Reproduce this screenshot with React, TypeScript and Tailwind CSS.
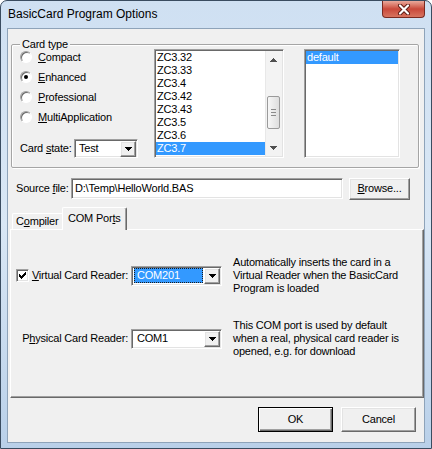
import React from 'react'

const raised =
  'bg-[#f0f0f0] border border-t-white border-l-white border-r-[#696969] border-b-[#696969] shadow-[inset_-1px_-1px_0_#a0a0a0,inset_1px_1px_0_#e3e3e3]'
const sunken =
  'bg-white border border-t-[#a0a0a0] border-l-[#a0a0a0] border-r-white border-b-white shadow-[inset_1px_1px_0_#696969,inset_-1px_-1px_0_#e3e3e3] p-px'

const versions = ['ZC3.32', 'ZC3.33', 'ZC3.4', 'ZC3.42', 'ZC3.43', 'ZC3.5', 'ZC3.6', 'ZC3.7', 'ZC3.8']

function Mn({ children }: { children: React.ReactNode }) {
  return <span className="underline decoration-1 underline-offset-[1px]">{children}</span>
}

function ArrowDown({ color = '#000' }: { color?: string }) {
  return (
    <svg width="7" height="4" viewBox="0 0 7 4" shapeRendering="crispEdges">
      <path d="M0 0h7v1h-1v1h-1v1h-1v1h-1v-1h-1v-1h-1v-1h-1z" fill={color} />
    </svg>
  )
}

function ArrowUp({ color = '#000' }: { color?: string }) {
  return (
    <svg width="7" height="4" viewBox="0 0 7 4" shapeRendering="crispEdges">
      <path d="M0 4h7v-1h-1v-1h-1v-1h-1v-1h-1v1h-1v1h-1v1h-1z" fill={color} />
    </svg>
  )
}

function DropButton() {
  return (
    <div className={`${raised} flex h-[16px] w-[16px] shrink-0 items-center justify-center`}>
      <ArrowDown />
    </div>
  )
}

function Radio({ first, rest, checked }: { first: string; rest: string; checked?: boolean }) {
  return (
    <div className="flex h-[20px] items-center">
      <div className="flex h-[12px] w-[12px] items-center justify-center rounded-full border border-t-[#a0a0a0] border-l-[#a0a0a0] border-r-white border-b-white bg-white shadow-[inset_1px_1px_0_#696969]">
        {checked && <div className="h-[4px] w-[4px] rounded-full bg-black" />}
      </div>
      <span className="ml-[6px]">
        <Mn>{first}</Mn>
        {rest}
      </span>
    </div>
  )
}

function Scrollbar() {
  return (
    <div className="flex w-[17px] shrink-0 flex-col bg-[#f3f3f3] shadow-[inset_1px_0_0_#e8e8e8]">
      <div className="flex h-[17px] items-center justify-center">
        <ArrowUp color="#505050" />
      </div>
      <div className="flex-1">
        <div className="mx-[2px] mt-[28px] flex h-[33px] flex-col items-center justify-center gap-[2px] rounded-[2px] border border-[#9a9a9a] bg-gradient-to-r from-[#f7f7f7] to-[#dedede]">
          <div className="h-px w-[5px] bg-[#8a8a8a]" />
          <div className="h-px w-[5px] bg-[#8a8a8a]" />
          <div className="h-px w-[5px] bg-[#8a8a8a]" />
        </div>
      </div>
      <div className="flex h-[17px] items-center justify-center">
        <ArrowDown color="#505050" />
      </div>
    </div>
  )
}

function Combo({ value, selected }: { value: string; selected?: boolean }) {
  return (
    <div className={`${sunken} flex h-[20px] w-[91px] items-center`}>
      <div className="flex-1 pl-[1px] pr-[1px]">
        {selected ? (
          <div className="h-[15px] border border-dotted border-[#1a1a1a] bg-[#3399ff] pl-[2px] leading-[13px] text-white">
            {value}
          </div>
        ) : (
          <div className="h-[15px] pl-[3px] leading-[15px]">{value}</div>
        )}
      </div>
      <DropButton />
    </div>
  )
}

function CloseIcon() {
  return (
    <svg width="14" height="11" viewBox="0 0 14 11">
      <path d="M3 1.5l8 8M11 1.5l-8 8" stroke="#5b1a12" strokeWidth="4" strokeLinecap="round" />
      <path d="M3 1.5l8 8M11 1.5l-8 8" stroke="#fff" strokeWidth="2.2" strokeLinecap="round" />
    </svg>
  )
}

export default function App() {
  return (
    <div className="h-[449px] w-[432px] font-['Liberation_Sans',Arial,sans-serif] text-[11px] leading-[13px] tracking-[-0.2px] text-black">
      <div className="flex h-full w-full flex-col rounded-t-[7px] border border-[#3a4c60] bg-gradient-to-b from-[#cfe0f2] via-[#d9e7f5] to-[#b9d0e9]">
        {/* title bar */}
        <div className="flex h-[28px] items-start justify-between">
          <span className="pl-[7px] pt-[6px] text-[12px] leading-[15px] tracking-normal">BasicCard Program Options</span>
          <div className="mr-[6px] flex h-[17px] w-[43px] items-center justify-center rounded-b-[4px] border border-t-0 border-[#7a2a20] bg-gradient-to-b from-[#e9a99c] via-[#c9483a] to-[#d7735f]">
            <CloseIcon />
          </div>
        </div>

        {/* client area */}
        <div className="mx-[7px] flex h-[413px] w-[416px] flex-col bg-[#f0f0f0] shadow-[0_0_0_1px_#8ea3b9]">
          {/* Card type group */}
          <div className="relative ml-[3px] mt-[15px] h-[124px] w-[408px] rounded-[2px] border border-[#a5a5a5] shadow-[inset_1px_1px_0_#fff,1px_1px_0_#fff]">
            <span className="absolute -top-[7px] left-[8px] bg-[#f0f0f0] px-[2px] leading-[13px]">Card type</span>
            <div className="flex items-start">
              <div className="w-[142px] pl-[8px] pt-[2px]">
                <Radio first="C" rest="ompact" />
                <Radio first="E" rest="nhanced" checked />
                <Radio first="P" rest="rofessional" />
                <Radio first="M" rest="ultiApplication" />
                <div className="mt-[12px] flex h-[19px] items-center">
                  <span className="w-[54px]">
                    Card <Mn>s</Mn>tate:
                  </span>
                  <div className={`${sunken} flex h-[19px] w-[64px] items-center`}>
                    <span className="flex-1 pl-[3px]">Test</span>
                    <DropButton />
                  </div>
                </div>
              </div>
              <div className={`${sunken} mt-[4px] flex h-[109px] w-[130px]`}>
                <div className="flex-1 overflow-hidden">
                  {versions.map((v) => (
                    <div
                      key={v}
                      className={`h-[13px] pl-[1px] leading-[13px] ${v === 'ZC3.7' ? 'bg-[#3399ff] text-white' : ''}`}
                    >
                      {v}
                    </div>
                  ))}
                </div>
                <Scrollbar />
              </div>
              <div className={`${sunken} ml-[20px] mt-[4px] h-[109px] w-[96px]`}>
                <div className="h-[13px] bg-[#3399ff] pl-[1px] leading-[13px] text-white">default</div>
              </div>
            </div>
          </div>

          {/* source file */}
          <div className="ml-[8px] mt-[10px] flex h-[21px] items-center">
            <span className="w-[55px]">
              Source <Mn>f</Mn>ile:
            </span>
            <div className={`${sunken} flex h-[21px] w-[272px] items-center`}>
              <span className="pl-[2px]">D:\Temp\HelloWorld.BAS</span>
            </div>
            <div className={`${raised} ml-[6px] flex h-[22px] w-[61px] items-center justify-center`}>
              <span>
                <Mn>B</Mn>rowse...
              </span>
            </div>
          </div>

          {/* tabs */}
          <div className="mt-[8px] flex h-[22px] items-end pl-[4px]">
            <div className="flex h-[16px] w-[50px] items-center rounded-tl-[2px] border-l border-t border-l-white border-t-white pl-[3px]">
              C<Mn>o</Mn>mpiler
            </div>
            <div className="relative z-10 -mb-px flex h-[23px] w-[65px] items-center rounded-t-[2px] border-l border-r border-t border-l-white border-r-[#696969] border-t-white bg-[#f0f0f0] pb-[1px] pl-[5px] shadow-[inset_-1px_0_0_#a0a0a0]">
              COM Por<Mn>t</Mn>s
            </div>
          </div>
          <div className="ml-[2px] h-[169px] w-[414px] border border-b-[#696969] border-l-white border-r-[#696969] border-t-white pt-[26px] shadow-[inset_-1px_-1px_0_#a0a0a0]">
            <div className="flex items-center">
              <div className="flex w-[120px] items-center justify-between pl-[5px] pr-[3px]">
                <div className={`${sunken} flex h-[13px] w-[13px] items-center justify-center p-0`}>
                  <svg width="7" height="7" viewBox="0 0 7 7" shapeRendering="crispEdges">
                    <path d="M0 2h1v1h1v1h1v-1h1v-1h1v-1h1v-1h1v3h-1v1h-1v1h-1v1h-1v1h-1v-1h-1v-1h-1z" fill="#000" />
                  </svg>
                </div>
                <span>
                  <Mn>V</Mn>irtual Card Reader:
                </span>
              </div>
              <Combo value="COM201" selected />
              <div className="ml-[11px] whitespace-nowrap">
                Automatically inserts the card in a
                <br />
                Virtual Reader when the BasicCard
                <br />
                Program is loaded
              </div>
            </div>
            <div className="mt-[24px] flex items-center">
              <div className="flex w-[120px] justify-end pr-[3px]">
                <span>
                  P<Mn>h</Mn>ysical Card Reader:
                </span>
              </div>
              <Combo value="COM1" />
              <div className="ml-[11px] whitespace-nowrap">
                This COM port is used by default
                <br />
                when a real, physical card reader is
                <br />
                opened, e.g. for download
              </div>
            </div>
          </div>

          {/* buttons */}
          <div className="mt-[9px] flex justify-end gap-[8px] pr-[8px]">
            <div className="flex h-[25px] w-[75px] items-center justify-center border border-black bg-[#f0f0f0] shadow-[inset_1px_1px_0_#fff,inset_-1px_-1px_0_#696969,inset_-2px_-2px_0_#a0a0a0]">
              OK
            </div>
            <div className={`${raised} flex h-[25px] w-[75px] items-center justify-center`}>Cancel</div>
          </div>
        </div>
      </div>
    </div>
  )
}
